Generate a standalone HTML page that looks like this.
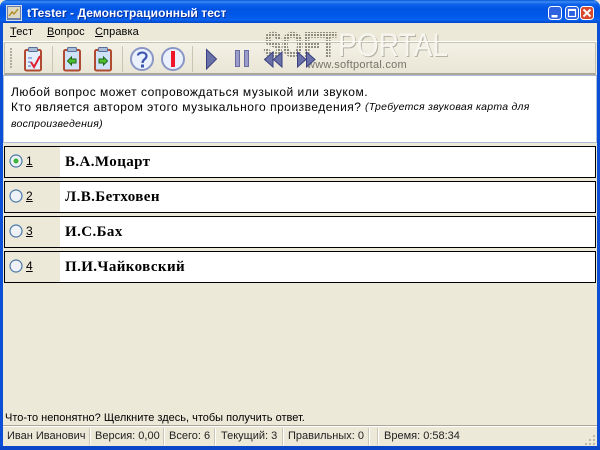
<!DOCTYPE html>
<html><head><meta charset="utf-8">
<style>
html,body{margin:0;padding:0;width:600px;height:450px;overflow:hidden;background:#ece9d8}
body{position:relative;font-family:"Liberation Sans","DejaVu Sans",sans-serif;font-size:12px;color:#000}
.a{position:absolute;white-space:nowrap}
.title{left:0;top:0;width:600px;height:23px;background:linear-gradient(180deg,#0a56d8 0,#3a8cf6 2px,#0f62ea 4px,#0054e3 9px,#0058e8 16px,#0a62ee 20px,#0044c8 23px);border-radius:7px 7px 0 0}
.row{left:4px;width:590px;height:30px;border:1px solid #000;background:#fff}
.row .l{position:absolute;left:0;top:0;width:55px;height:30px;background:#ece9d8}
.row .t{position:absolute;left:60px;top:7px;font:bold 15px "Liberation Serif",serif;letter-spacing:.4px}
.row .n{position:absolute;left:21px;top:7px;font-size:12px;text-decoration:underline}
.row svg{position:absolute;left:4px;top:7px}
.m{top:26px;font-size:11px;letter-spacing:.1px}
.m u{text-decoration:underline}
.s{top:430px;font-size:11px;letter-spacing:0;color:#222}
.sep{top:428px;width:1px;height:17px;background:#fff;box-shadow:-1px 0 0 #c9c6b4}
</style></head><body>
<div class="a title"></div>
<div class="a" style="left:0;top:22px;width:3px;height:428px;background:#0a4fd6"></div>
<div class="a" style="left:597px;top:22px;width:3px;height:428px;background:#0a4fd6"></div>
<div class="a" style="left:0;top:446px;width:600px;height:4px;background:#0a46c8"></div>

<svg class="a" style="left:6px;top:5px" width="16" height="16"><rect x=".5" y=".5" width="15" height="15" fill="#6a7fa8" stroke="#d8dde8"/><rect x="2" y="2" width="12" height="11" fill="#ddd8c4"/><path d="M3 11 L6 7 L8 9 L12 4" stroke="#b08a20" fill="none" stroke-width="1.4"/></svg>
<div class="a" style="left:27px;top:6px;font-weight:bold;font-size:12px;color:#fff;text-shadow:1px 1px 0 #0a2f9c;letter-spacing:.07px">tTester - Демонстрационный тест</div>

<!-- window buttons -->
<svg class="a" style="left:547px;top:5px" width="50" height="16">
<rect x="1.500" y="1.500" width="13" height="13" rx="3" fill="#2f62e0" stroke="#fff"/><rect x="4.500" y="10" width="6" height="2.500" fill="#fff"/>
<rect x="18.500" y="1.500" width="13" height="13" rx="3" fill="#2a5fe0" stroke="#fff"/><rect x="21.500" y="4.500" width="7" height="7" fill="none" stroke="#fff" stroke-width="1.200"/><rect x="21.500" y="4" width="7" height="2" fill="#fff"/>
<rect x="33.500" y="1.500" width="13" height="13" rx="3" fill="#d8482a" stroke="#fff"/><path d="M36.500 4.500 L43.500 11.500 M43.500 4.500 L36.500 11.500" stroke="#fff" stroke-width="2"/>
</svg>

<!-- menu -->
<div class="a m" style="left:10px"><u>Т</u>ест</div>
<div class="a m" style="left:47px"><u>В</u>опрос</div>
<div class="a m" style="left:95px"><u>С</u>правка</div>

<!-- toolbar -->
<div class="a" style="left:4px;top:42px;width:590px;height:30px;border:1px solid #c5c2b0;background:linear-gradient(180deg,#f3f1e6,#e9e6d6);border-bottom:2px solid #aca899"></div>

<!-- watermark -->
<svg class="a" style="left:260px;top:25px" width="200" height="40">
<defs><pattern id="dots" width="3" height="3" patternUnits="userSpaceOnUse"><rect width="2" height="2" fill="#8f8d80"/></pattern></defs>
<text x="4" y="31" font-family="Liberation Sans" font-weight="bold" font-size="33" fill="url(#dots)" stroke="url(#dots)" stroke-width="2" textLength="72" lengthAdjust="spacingAndGlyphs">SOFT</text>
<text x="79" y="32" font-family="Liberation Sans" font-size="32" fill="#b4b2a4" textLength="110" lengthAdjust="spacingAndGlyphs">PORTAL</text>
<text x="78" y="31" font-family="Liberation Sans" font-size="32" fill="#f6f5ee" textLength="110" lengthAdjust="spacingAndGlyphs">PORTAL</text>
</svg>
<div class="a" style="left:3px;top:41px;width:594px;height:1px;background:#fff"></div>
<div class="a" style="left:307px;top:59px;font:11px/13px 'Liberation Sans',sans-serif;color:#757368;letter-spacing:.25px">www.softportal.com</div>

<svg class="a" style="left:0;top:42px" width="340" height="34">
<!-- grip -->
<g fill="#b0ad9c"><rect x="10" y="6" width="2" height="2"/><rect x="10" y="9" width="2" height="2"/><rect x="10" y="12" width="2" height="2"/><rect x="10" y="15" width="2" height="2"/><rect x="10" y="18" width="2" height="2"/><rect x="10" y="21" width="2" height="2"/><rect x="10" y="24" width="2" height="2"/></g>
<!-- seps -->
<g fill="#c9c6b4"><rect x="52" y="4" width="1" height="26"/><rect x="122" y="4" width="1" height="26"/><rect x="192" y="4" width="1" height="26"/></g>
<!-- clipboard 1 -->
<rect x="25" y="8" width="16" height="20.500" rx="1.500" fill="#e4eefc" stroke="#b04a30" stroke-width="2"/>
<rect x="28.500" y="5.500" width="9" height="4" rx="1" fill="#a8bcd8" stroke="#5a6f98"/>
<path d="M28 16h4M28 20h3M28 24h3" stroke="#5070c0"/>
<path d="M31 20 L34 25 L40 14" stroke="#e02030" stroke-width="2" fill="none"/>
<!-- clipboard 2 -->
<rect x="64" y="8" width="16" height="20.500" rx="1.500" fill="#cfe2fa" stroke="#b04a30" stroke-width="2"/>
<rect x="67.500" y="5.500" width="9" height="4" rx="1" fill="#a8bcd8" stroke="#5a6f98"/>
<path d="M67.500 19 L71.500 15 V17 H76 V21 H71.500 V23 Z" fill="#50c030" stroke="#1c6a18"/>
<!-- clipboard 3 -->
<rect x="95" y="8" width="16" height="20.500" rx="1.500" fill="#cfe2fa" stroke="#b04a30" stroke-width="2"/>
<rect x="98.500" y="5.500" width="9" height="4" rx="1" fill="#a8bcd8" stroke="#5a6f98"/>
<path d="M107.500 19 L103.500 15 V17 H99 V21 H103.500 V23 Z" fill="#50c030" stroke="#1c6a18"/>
<!-- help -->
<circle cx="142" cy="17" r="11" fill="#eaf1fc" stroke="#8a96c4" stroke-width="2"/>
<path d="M138 13.500 C138 9.500 146.500 9.500 146.500 14 C146.500 17.500 142.500 17 142.500 21" fill="none" stroke="#3a56b0" stroke-width="2.200"/>
<rect x="141" y="22.500" width="3" height="3" fill="#3a56b0"/>
<!-- stop -->
<circle cx="173" cy="17" r="11" fill="#eaf1fc" stroke="#8a96c4" stroke-width="2"/>
<rect x="171" y="9" width="4" height="16" fill="#f01828"/>
<!-- play -->
<path d="M206.500 7.500 L216.500 17 L206.500 27 Z" fill="#6a70a8" stroke="#3a4080"/>
<!-- pause -->
<rect x="235.500" y="8.500" width="4" height="16" fill="#9a9ccc" stroke="#6a6ca0"/>
<rect x="244.500" y="8.500" width="4" height="16" fill="#9a9ccc" stroke="#6a6ca0"/>
<!-- rewind -->
<path d="M273 10 L264.500 17.500 L273 25 Z" fill="#6a70a8" stroke="#3a4080"/>
<path d="M282 10 L273.500 17.500 L282 25 Z" fill="#6a70a8" stroke="#3a4080"/>
<!-- forward -->
<path d="M297.500 10 L306 17.500 L297.500 25 Z" fill="#6a70a8" stroke="#3a4080"/>
<path d="M306.500 10 L315 17.500 L306.500 25 Z" fill="#6a70a8" stroke="#3a4080"/>
</svg>

<!-- question -->
<div class="a" style="left:3px;top:75px;width:592px;height:66px;background:#fff;border:1px solid #a9bdd8"></div>
<div class="a" style="left:11px;top:85px;font-size:12px;line-height:15px;letter-spacing:.5px">Любой вопрос может сопровождаться музыкой или звуком.<br>Кто является автором этого музыкального произведения?</div>
<div class="a" style="left:365px;top:101px;font-size:10.500px;font-style:italic;letter-spacing:.25px">(Требуется звуковая карта для</div>
<div class="a" style="left:11px;top:118px;font-size:10.500px;font-style:italic;letter-spacing:.25px">воспроизведения)</div>

<!-- answers -->
<div class="a row" style="top:146px"><div class="l"></div><svg width="14" height="14"><circle cx="7" cy="7" r="6" fill="#eef1f6" stroke="#4a78a8" stroke-width="1.200"/><circle cx="7" cy="7" r="2.500" fill="#3cb43c"/></svg><div class="n">1</div><div class="t">В.А.Моцарт</div></div>
<div class="a row" style="top:181px"><div class="l"></div><svg width="14" height="14"><circle cx="7" cy="7" r="6" fill="#eef1f6" stroke="#4a78a8" stroke-width="1.200"/></svg><div class="n">2</div><div class="t">Л.В.Бетховен</div></div>
<div class="a row" style="top:216px"><div class="l"></div><svg width="14" height="14"><circle cx="7" cy="7" r="6" fill="#eef1f6" stroke="#4a78a8" stroke-width="1.200"/></svg><div class="n">3</div><div class="t">И.С.Бах</div></div>
<div class="a row" style="top:251px"><div class="l"></div><svg width="14" height="14"><circle cx="7" cy="7" r="6" fill="#eef1f6" stroke="#4a78a8" stroke-width="1.200"/></svg><div class="n">4</div><div class="t">П.И.Чайковский</div></div>

<div class="a" style="left:5px;top:412px;font-size:11px;letter-spacing:0">Что-то непонятно? Щелкните здесь, чтобы получить ответ.</div>

<!-- status -->
<div class="a" style="left:3px;top:425px;width:594px;height:1px;background:#aca899"></div>
<div class="a" style="left:3px;top:426px;width:594px;height:1px;background:#fff"></div>
<div class="a s" style="left:7px">Иван Иванович</div><div class="a sep" style="left:90px"></div>
<div class="a s" style="left:95px">Версия: 0,00</div><div class="a sep" style="left:164px"></div>
<div class="a s" style="left:169px">Всего: 6</div><div class="a sep" style="left:215px"></div>
<div class="a s" style="left:221px">Текущий: 3</div><div class="a sep" style="left:283px"></div>
<div class="a s" style="left:288px">Правильных: 0</div><div class="a sep" style="left:369px"></div><div class="a sep" style="left:378px"></div>
<div class="a s" style="left:384px">Время: 0:58:34</div>
<svg class="a" style="left:583px;top:433px" width="13" height="13"><g fill="#bdb9a6"><rect x="10" y="2" width="2" height="2"/><rect x="6" y="6" width="2" height="2"/><rect x="10" y="6" width="2" height="2"/><rect x="2" y="10" width="2" height="2"/><rect x="6" y="10" width="2" height="2"/><rect x="10" y="10" width="2" height="2"/></g></svg>
</body></html>
